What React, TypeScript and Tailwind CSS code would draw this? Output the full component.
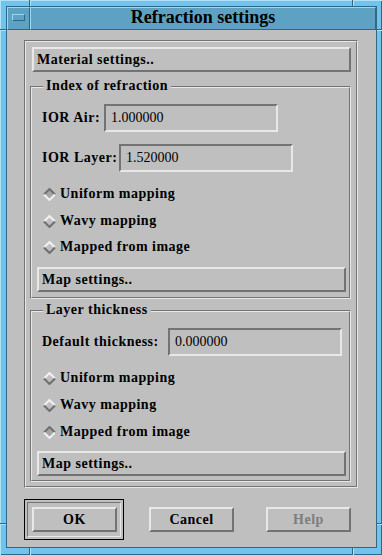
import React from 'react';

const serif = "font-['Liberation_Serif',serif]";

function Diamond({ selected }: { selected?: boolean }) {
  const top = selected ? '#6e6e6e' : '#f2f2f2';
  const bottom = selected ? '#f2f2f2' : '#6e6e6e';
  return (
    <svg width="13" height="13" viewBox="0 0 13 13" className="shrink-0">
      <polygon points="6.5,0 13,6.5 6.5,13 0,6.5" fill={selected ? '#a6a6a6' : '#bfbfbf'} />
      <path d="M1 6.5 L6.5 1 L12 6.5" stroke={top} strokeWidth="2" fill="none" strokeLinejoin="miter" />
      <path d="M1 6.5 L6.5 12 L12 6.5" stroke={bottom} strokeWidth="2" fill="none" strokeLinejoin="miter" />
    </svg>
  );
}

function Radio({ label, selected, className = '' }: { label: string; selected?: boolean; className?: string }) {
  return (
    <div className={`h-[20px] flex items-center ml-[11px] ${className}`}>
      <Diamond selected={selected} />
      <span className="ml-[4px] text-[14px] leading-[16px] font-bold tracking-[0.5px]">{label}</span>
    </div>
  );
}

function PushButton({ label, className = '', left }: { label: string; className?: string; left?: boolean }) {
  return (
    <div
      className={`h-[25px] border-2 border-t-[#e8e8e8] border-l-[#e8e8e8] border-b-[#737373] border-r-[#737373] flex items-center text-[14px] leading-[16px] font-bold tracking-[0.5px] ${
        left ? 'justify-start pl-[3px]' : 'justify-center'
      } ${className}`}
    >
      {label}
    </div>
  );
}

function Field({ value }: { value: string }) {
  return (
    <div className="w-[174px] h-[28px] border-2 border-t-[#737373] border-l-[#737373] border-b-[#e8e8e8] border-r-[#e8e8e8] flex items-center pl-[5px] text-[14px] leading-[16px]">
      {value}
    </div>
  );
}

function Etched({ className = '', inner = '', children }: { className?: string; inner?: string; children?: React.ReactNode }) {
  return (
    <div className={`border border-t-[#737373] border-l-[#737373] border-b-[#e8e8e8] border-r-[#e8e8e8] ${className}`}>
      <div className={`border border-t-[#e8e8e8] border-l-[#e8e8e8] border-b-[#737373] border-r-[#737373] ${inner}`}>
        {children}
      </div>
    </div>
  );
}

function Group({ title, className = '', children }: { title: string; className?: string; children: React.ReactNode }) {
  return (
    <Etched className={`relative w-[321px] ml-[4px] ${className}`} inner="flex flex-col">
      <span className="absolute left-[12px] -top-[9px] h-[16px] px-[3px] bg-[#bfbfbf] text-[14px] leading-[16px] font-bold tracking-[0.5px]">
        {title}
      </span>
      {children}
    </Etched>
  );
}

function HStrip() {
  return (
    <div className="h-full flex">
      <div className="w-[29px]" />
      <div className="w-px bg-[#2d6884]" />
      <div className="w-px bg-[#aee3fa]" />
      <div className="w-[321px]" />
      <div className="w-px bg-[#2d6884]" />
      <div className="w-px bg-[#aee3fa]" />
      <div className="flex-1" />
    </div>
  );
}

function VStrip({ className = '' }: { className?: string }) {
  return (
    <div className={`flex flex-col ${className}`}>
      <div className="h-[23px]" />
      <div className="h-px bg-[#2d6884]" />
      <div className="h-px bg-[#aee3fa]" />
      <div className="h-[492px]" />
      <div className="h-px bg-[#2d6884]" />
      <div className="h-px bg-[#aee3fa]" />
      <div className="flex-1" />
    </div>
  );
}

export default function App() {
  return (
    <div
      className={`w-[382px] h-[555px] flex flex-col bg-[#70c4eb] shadow-[inset_1px_1px_0_#aee3fa,inset_-1px_-1px_0_#2d6884] text-black ${serif}`}
    >
      <div className="h-[6px]">
        <HStrip />
      </div>
      <div className="flex h-[542px]">
        <VStrip className="w-[6px]" />
        <div className="w-[371px] h-[542px] border border-[#2d6884] flex flex-col">
          {/* title bar */}
          <div className="h-[23px] flex bg-[#5ea2c3]">
            <div className="w-[23px] border-t border-l border-t-[#9bd8f4] border-l-[#9bd8f4] border-b border-r border-b-[#2d6884] border-r-[#2d6884]">
              <div className="ml-[4px] mt-[6px] w-[13px] h-[7px] border border-t-[#9bd8f4] border-l-[#9bd8f4] border-b-[#2d6884] border-r-[#2d6884]" />
            </div>
            <div className="flex-1 border-t border-l border-t-[#9bd8f4] border-l-[#9bd8f4] border-b border-r border-b-[#2d6884] border-r-[#2d6884] flex justify-center">
              <span className="h-[18px] leading-[18px] text-[18px] font-bold">Refraction settings</span>
            </div>
          </div>

          {/* client area */}
          <div className="flex-1 bg-[#bfbfbf] pl-[17px] pt-[10px] flex flex-col">
            <Etched className="w-[334px]" inner="flex flex-col pt-[5px] pb-[4px]">
              <PushButton label="Material settings.." left className="ml-[6px] w-[319px] h-[24px]" />

              <Group title="Index of refraction" className="mt-[14px]">
                <div className="flex items-center ml-[10px] mt-[16px]">
                  <span className="w-[62px] text-[14px] leading-[16px] font-bold tracking-[0.5px]">IOR Air:</span>
                  <Field value="1.000000" />
                </div>
                <div className="flex items-center ml-[10px] mt-[12px]">
                  <span className="w-[77px] text-[14px] leading-[16px] font-bold tracking-[0.5px]">IOR Layer:</span>
                  <Field value="1.520000" />
                </div>
                <Radio label="Uniform mapping" selected className="mt-[12px]" />
                <Radio label="Wavy mapping" className="mt-[7px]" />
                <Radio label="Mapped from image" className="mt-[6px]" />
                <PushButton label="Map settings.." left className="ml-[5px] w-[309px] mt-[10px] mb-[5px]" />
              </Group>

              <Group title="Layer thickness" className="mt-[11px]">
                <div className="flex items-center ml-[10px] mt-[16px]">
                  <span className="w-[126px] text-[14px] leading-[16px] font-bold tracking-[0.5px]">Default thickness:</span>
                  <Field value="0.000000" />
                </div>
                <Radio label="Uniform mapping" className="mt-[12px]" />
                <Radio label="Wavy mapping" className="mt-[7px]" />
                <Radio label="Mapped from image" selected className="mt-[7px]" />
                <PushButton label="Map settings.." left className="ml-[5px] w-[309px] mt-[9px] mb-[4px]" />
              </Group>
            </Etched>

            <div className="flex items-center mt-[11px]">
              <div className="w-[100px] h-[41px] border border-black p-[2px]">
                <div className="w-[94px] h-[35px] border border-t-[#737373] border-l-[#737373] border-b-[#e8e8e8] border-r-[#e8e8e8]">
                  <PushButton label="OK" className="ml-[4px] mt-[4px] w-[85px]" />
                </div>
              </div>
              <PushButton label="Cancel" className="ml-[25px] w-[85px]" />
              <PushButton label="Help" className="ml-[32px] w-[85px] text-[#7d7d7d]" />
            </div>
          </div>
        </div>
        <VStrip className="w-[5px]" />
      </div>
      <div className="h-[7px]">
        <HStrip />
      </div>
    </div>
  );
}
